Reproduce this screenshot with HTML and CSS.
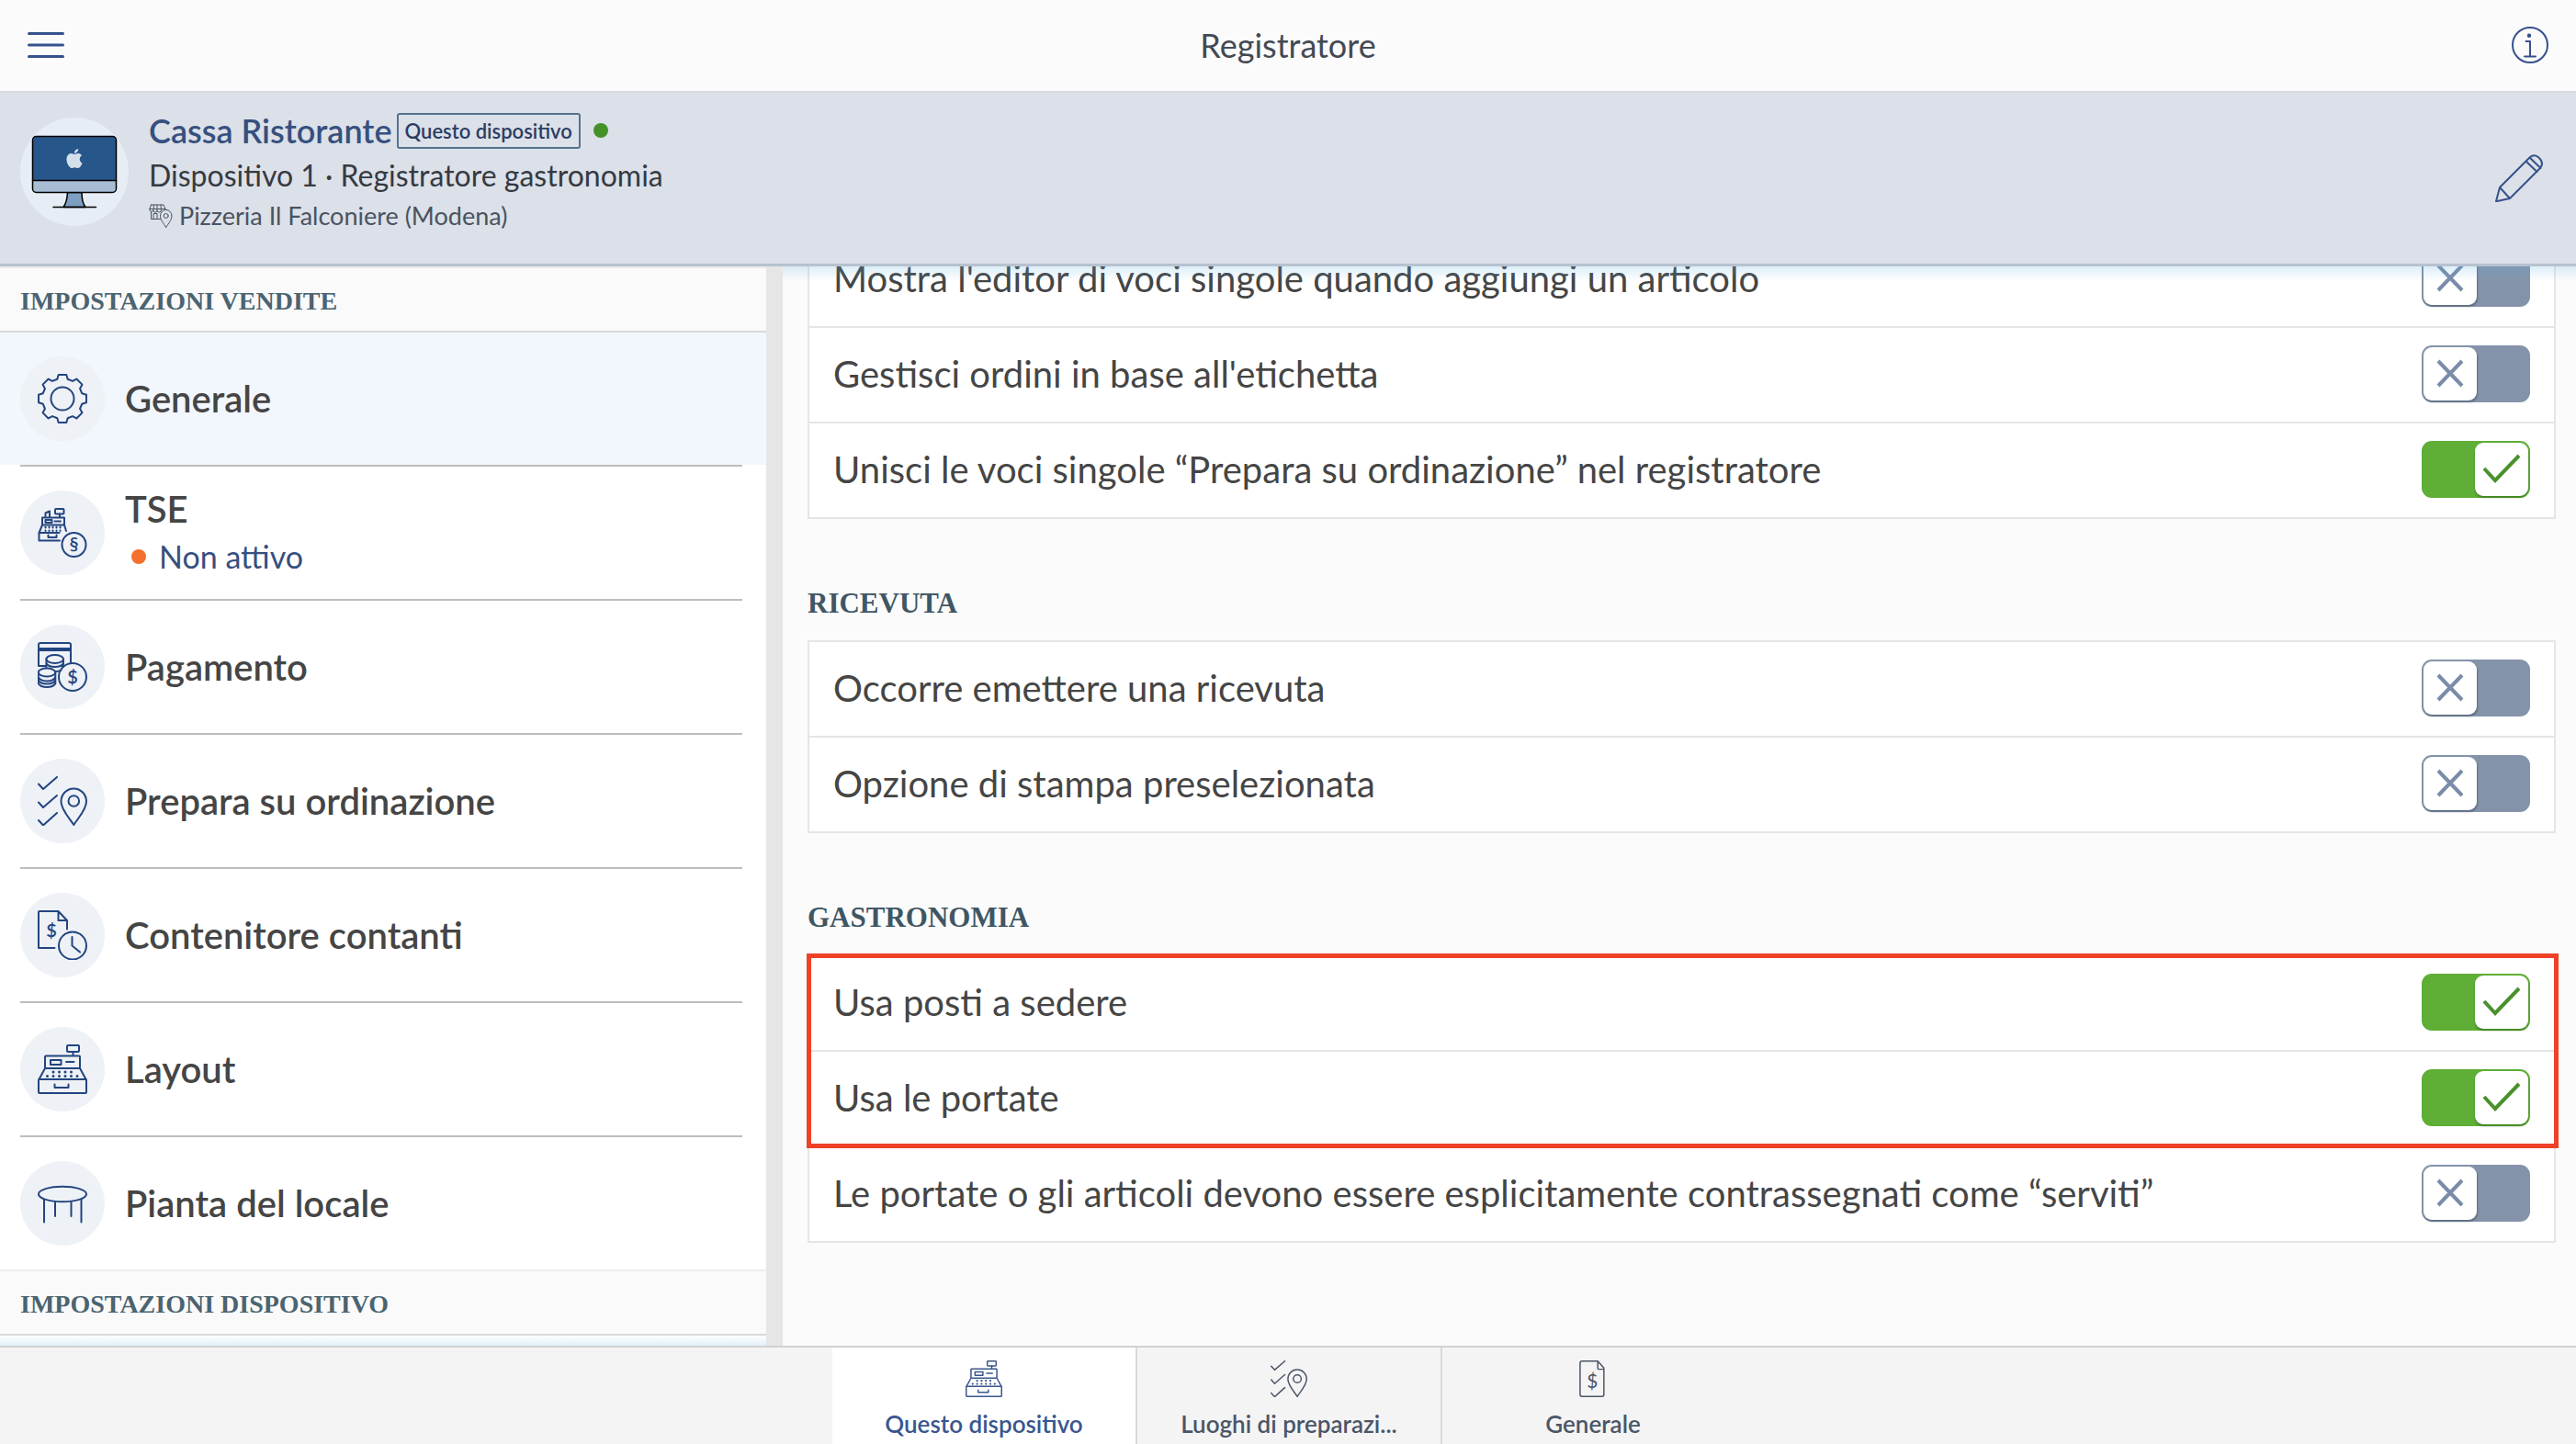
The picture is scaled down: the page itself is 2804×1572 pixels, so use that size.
FILE: index.html
```html
<!DOCTYPE html>
<html lang="it">
<head>
<meta charset="utf-8">
<meta name="viewport" content="width=device-width, initial-scale=1">
<title>Registratore</title>
<link rel="stylesheet" href="styles.css">
</head>
<body>
<svg class="sprite" aria-hidden="true">
  <symbol id="register" viewBox="0 0 54 54">
    <rect x="32" y="1" width="13" height="7" rx="1"/>
    <path d="M38.500 8v4.500M8 26V13.500q0-1 1-1h36q1 0 1 1V26zM8 26L1.500 38M46 26l6.500 12M31 19h8.500M18.500 43.500V47h15v-3.500"/>
    <rect x="14" y="17" width="11.500" height="5"/>
    <rect x="1" y="38" width="52" height="15" rx="1"/>
    <path class="dots" d="M17 30h.01M23.500 30h.01M30 30h.01M36.500 30h.01M10.500 34.500h.01M17 34.500h.01M23.500 34.500h.01M30 34.500h.01M36.500 34.500h.01M43 34.500h.01"/>
  </symbol>
  <symbol id="orders" viewBox="0 0 54 54">
    <path d="M1 8.500L6 14 21 1M1 28.500L6 34 21 21M1 48l5 5.500L21 40M39.300 53C35 46 25.500 37 25.500 27.500a13.700 14 0 0 1 27.500 0C53 37 43.500 46 39.300 53z"/>
    <circle cx="39.300" cy="27" r="5.800"/>
  </symbol>
</svg>

<header class="topbar">
  <button class="icon-button" type="button" aria-label="Menu">
    <svg class="menu-icon" viewBox="0 0 40 30"><path d="M1.500 2.500h37M1.500 15h37M1.500 27.500h37"/></svg>
  </button>
  <h1 class="title">Registratore</h1>
  <button class="icon-button" type="button" aria-label="Informazioni">
    <svg class="info-icon" viewBox="0 0 40 40"><circle cx="20" cy="20" r="19"/><path d="M15.500 16h4.500v16.500M14 32.500h12"/><circle class="solid" cx="19" cy="9.800" r="1.200"/></svg>
  </button>
</header>

<section class="device">
  <svg class="avatar" viewBox="0 0 118 118" aria-hidden="true">
    <circle cx="59" cy="59" r="59" fill="#e7edf5"/>
    <path d="M51.500 81.500Q51 92 47 97.500h24Q67 92 67 81.500z" fill="#7d9fc1" stroke="#000" stroke-width="1.500"/>
    <path d="M36 97.500h46.500" stroke="#000" stroke-width="1.500"/>
    <rect x="13.500" y="20.500" width="91" height="61" rx="4" fill="#a6bdd4"/>
    <path d="M13.500 68.500v-44q0-4 4-4h83q4 0 4 4v44z" fill="#27568b"/>
    <path d="M13.500 68.500h91" stroke="#000" stroke-width="1.500"/>
    <rect x="13.500" y="20.500" width="91" height="61" rx="4" fill="none" stroke="#000" stroke-width="1.500"/>
    <path transform="translate(48.500 34) scale(.875)" fill="#d3dfeb" d="M12.152 6.896c-.948 0-2.415-1.078-3.960-1.040-2.040.027-3.910 1.183-4.961 3.014-2.117 3.675-.546 9.103 1.519 12.090 1.013 1.454 2.208 3.090 3.792 3.039 1.520-.065 2.090-.987 3.935-.987 1.831 0 2.350.987 3.960.948 1.637-.026 2.676-1.480 3.676-2.948 1.156-1.688 1.636-3.325 1.662-3.415-.039-.013-3.182-1.221-3.220-4.857-.026-3.040 2.480-4.494 2.597-4.559-1.429-2.090-3.623-2.324-4.390-2.376-2-.156-3.675 1.090-4.610 1.090zM15.530 3.830c.843-1.012 1.400-2.427 1.245-3.830-1.207.052-2.662.805-3.532 1.818-.780.896-1.454 2.338-1.273 3.714 1.338.104 2.715-.688 3.559-1.701"/>
  </svg>
  <div class="device-text">
    <div class="device-name"><strong>Cassa Ristorante</strong><span class="badge">Questo dispositivo</span><span class="dot online"></span></div>
    <div class="device-kind">Dispositivo 1 · Registratore gastronomia</div>
    <div class="device-place">
      <svg class="place-icon" viewBox="0 0 26 26" aria-hidden="true"><path d="M2.500 1h13.500l2 4.500M2.500 1L1 5.500M1 5.500h17M5.500 1L5 7M9 1v6M13 1l.5 6M1 5.500a2 2 0 0 0 4 1.500 2 2 0 0 0 4.200 0 2 2 0 0 0 4.200 0M2.500 8.500v8h10M5 16v-5.500h4V16M18.700 25.500C16 21 12.500 17.500 12.500 13a6.200 6.500 0 0 1 12.500 0c0 4.500-3.500 8-6.300 12.500z"/><circle cx="18.700" cy="13" r="2.500"/></svg>
      Pizzeria Il Falconiere (Modena)
    </div>
  </div>
  <button class="icon-button edit" type="button" aria-label="Modifica">
    <svg class="edit-icon" viewBox="0 0 52 52"><path d="M5 36L38 3q5-4 10 1 5.500 5.500 1 11L16 48 1 51.300zM5 36l11 12M33.500 7.500L45.500 19M37.500 3.500L49.500 15"/></svg>
  </button>
</section>

<div class="workspace">
  <nav class="sidebar" aria-label="Impostazioni">
    <h2 class="side-heading">IMPOSTAZIONI VENDITE</h2>
    <a class="side-item active" href="#generale">
      <span class="bubble"><svg viewBox="-27 -27 54 54"><path d="M-5.700-21.250L-4.300-26H4.300L5.700-21.250 11-19.060 15.340-21.430 21.430-15.340 19.060-11 21.250-5.700 26-4.300V4.300L21.250 5.700 19.060 11 21.430 15.340 15.340 21.430 11 19.060 5.700 21.250 4.300 26H-4.300L-5.700 21.250-11 19.060-15.340 21.430-21.430 15.340-19.060 11-21.250 5.700-26 4.300V-4.300L-21.250-5.700-19.060-11-21.430-15.340-15.340-21.430-11-19.060z"/><circle r="12.500"/></svg></span>
      <span class="side-label">Generale</span>
    </a>
    <a class="side-item" href="#tse">
      <span class="bubble"><svg viewBox="0 0 54 54"><rect x="19" y="1" width="9.500" height="5.500" rx="1"/><path d="M24 6.500V10M8.500 10V5.500L13 3.500V10M5 18.500v-8h24v8zM5 18.500L1.500 27h22M29 18.500L31 25M1.500 27v8.500h22.500M18.500 14.500h6.500M11.500 29.500v2.500h9v-2.500"/><rect x="8.500" y="13" width="7" height="3"/><path class="keys" d="M8.500 20.500v4.500M12.500 20.500v4.500M16.500 20.500v4.500M20.500 20.500v4.500M24.500 20.500v4.500"/><circle cx="39.500" cy="40" r="13"/><text class="sign" x="39.500" y="46">§</text></svg></span>
      <span class="side-label">TSE<small class="side-note"><span class="dot warning"></span>Non attivo</small></span>
    </a>
    <a class="side-item" href="#pagamento">
      <span class="bubble"><svg viewBox="0 0 54 54"><path d="M9 26H1V3q0-2 2-2h31q2 0 2 2v20"/><path class="stripe" d="M1 8h35"/><ellipse cx="18.700" cy="18.500" rx="9.300" ry="4.500"/><path d="M9.400 18.500V28M28 18.500V27M9.400 23q2 4 9.300 4 7.500 0 9.300-4M19.500 32q4 0 6-1.500"/><ellipse cx="10" cy="33" rx="9.300" ry="4.500"/><path d="M.7 33v12q2 4 9.300 4t9.300-4V33M.7 38q2 4.500 9.300 4.500t9.300-4.500M.7 41.500q2 4 9.300 4t9.300-4"/><circle cx="38" cy="38" r="15"/><text class="sign" x="38" y="45">$</text></svg></span>
      <span class="side-label">Pagamento</span>
    </a>
    <a class="side-item" href="#prepara">
      <span class="bubble"><svg><use href="#orders"/></svg></span>
      <span class="side-label">Prepara su ordinazione</span>
    </a>
    <a class="side-item" href="#contenitore">
      <span class="bubble"><svg viewBox="0 0 54 54"><path d="M18.500 41H1V2q0-1 1-1h20.500L32 11v9.500M22.500 1v10H32M37.500 29v9.500l8.500 7"/><circle cx="38" cy="38.500" r="15"/><text class="sign" x="15" y="28.500">$</text></svg></span>
      <span class="side-label">Contenitore contanti</span>
    </a>
    <a class="side-item" href="#layout">
      <span class="bubble"><svg><use href="#register"/></svg></span>
      <span class="side-label">Layout</span>
    </a>
    <a class="side-item" href="#pianta">
      <span class="bubble"><svg viewBox="0 0 54 54"><ellipse cx="27" cy="17" rx="26" ry="8.300"/><path d="M7 23v24.500M47.500 23v24.500M19 25.500V41M36.500 25.500V41"/></svg></span>
      <span class="side-label">Pianta del locale</span>
    </a>
    <h2 class="side-heading">IMPOSTAZIONI DISPOSITIVO</h2>
    <div class="side-more"></div>
  </nav>

  <main class="main">
    <div class="content">
      <div class="list">
        <label class="row">Mostra l'editor di voci singole quando aggiungi un articolo<input class="toggle" type="checkbox"></label>
        <label class="row">Gestisci ordini in base all'etichetta<input class="toggle" type="checkbox"></label>
        <label class="row">Unisci le voci singole “Prepara su ordinazione” nel registratore<input class="toggle" type="checkbox" checked></label>
      </div>
      <h2 class="heading">RICEVUTA</h2>
      <div class="list">
        <label class="row">Occorre emettere una ricevuta<input class="toggle" type="checkbox"></label>
        <label class="row">Opzione di stampa preselezionata<input class="toggle" type="checkbox"></label>
      </div>
      <h2 class="heading">GASTRONOMIA</h2>
      <div class="list">
        <div class="highlight">
          <label class="row">Usa posti a sedere<input class="toggle" type="checkbox" checked></label>
          <label class="row">Usa le portate<input class="toggle" type="checkbox" checked></label>
        </div>
        <label class="row">Le portate o gli articoli devono essere esplicitamente contrassegnati come “serviti”<input class="toggle" type="checkbox"></label>
      </div>
    </div>
  </main>
</div>

<nav class="tabs" aria-label="Sezioni">
  <a class="tab current" href="#dispositivo"><svg><use href="#register"/></svg><span>Questo dispositivo</span></a>
  <a class="tab" href="#luoghi"><svg><use href="#orders"/></svg><span>Luoghi di preparazi...</span></a>
  <a class="tab" href="#tutti"><svg viewBox="0 0 54 54"><path d="M11 1h23l9 10v39q0 3-3 3H11q-3 0-3-3V4q0-3 3-3zM34 1v10q0 2 2 2h7"/><text class="sign large" x="26" y="40">$</text></svg><span>Generale</span></a>
</nav>
</body>
</html>
```
FILE: styles.css
```css
* { box-sizing: border-box; }

body {
  margin: 0;
  height: 100vh;
  display: flex;
  flex-direction: column;
  overflow: hidden;
  background: #fbfbfb;
  color: #454545;
  font-family: Lato, "Open Sans", sans-serif;
  font-size: 40px;
}

h1, h2 { margin: 0; }
a { color: inherit; text-decoration: none; }

svg {
  fill: none;
  stroke: currentColor;
  stroke-width: 2;
  stroke-linecap: round;
  stroke-linejoin: round;
}

.sprite { display: none; }
.dots { stroke-width: 3; }
.keys { stroke-dasharray: 1 3; }
.stripe { stroke-width: 4; stroke-linecap: butt; }
.solid { fill: currentColor; }

.sign {
  fill: currentColor;
  stroke: none;
  text-anchor: middle;
  font-family: Lato, sans-serif;
  font-size: 20px;
  font-weight: 600;
}
.sign.large { font-size: 28px; font-weight: 400; }

.dot {
  display: inline-block;
  width: 16px;
  height: 16px;
  border-radius: 50%;
}
.online { margin-left: 14px; background: #44912a; }
.warning { margin: 0 14px 0 7px; background: #f4702c; }

.icon-button {
  display: flex;
  padding: 0;
  border: 0;
  background: none;
  color: #36528c;
}

/* Top bar */
.topbar {
  display: flex;
  align-items: center;
  justify-content: space-between;
  flex: none;
  height: 101px;
  padding: 0 30px 2px;
  border-bottom: 2px solid #d9dadb;
}
.title { font-size: 36px; font-weight: 400; color: #434a54; }
.menu-icon { width: 40px; height: 30px; stroke-width: 3; }
.info-icon { width: 40px; height: 40px; }

/* Device banner */
.device {
  display: flex;
  align-items: flex-start;
  gap: 22px;
  flex: none;
  min-height: 189px;
  padding: 18px 36px 18px 22px;
  border-bottom: 3px solid #b7c2cf;
  background: #dce0e8;
}
.avatar { width: 118px; height: 118px; margin-top: 9px; stroke: none; }
.device-text { flex: 1; }
.device-name {
  display: flex;
  align-items: center;
  height: 46px;
  font-size: 36px;
  color: #36507f;
}
.device-name strong { font-weight: 600; }
.badge {
  margin-left: 5px;
  padding: 0 7px;
  border: 2px solid #54738c;
  border-radius: 3px;
  font-size: 22px;
  line-height: 35px;
  font-weight: 600;
  color: #2b3d63;
}
.device-kind { font-size: 32px; line-height: 52px; color: #353a42; }
.device-place {
  display: flex;
  align-items: center;
  gap: 7px;
  font-size: 27px;
  line-height: 36px;
  color: #4a5361;
}
.place-icon { width: 26px; height: 26px; stroke-width: 1; }
.edit { align-self: center; }
.edit-icon { width: 52px; height: 52px; stroke-width: 2; }

/* Workspace */
.workspace {
  display: grid;
  grid-template-columns: minmax(0, 852px) minmax(0, 1fr);
  flex: 1;
  min-height: 0;
}

.sidebar {
  display: flex;
  flex-direction: column;
  overflow: hidden;
  border-right: 18px solid #e6e6e6;
  background: #fff;
}
.side-heading {
  flex: none;
  padding: 4px 22px 0;
  border-top: 2px solid #ececec;
  border-bottom: 2px solid #d9d9d9;
  background: #fafafa;
  color: #4a6471;
  font: bold 28px/64px "Liberation Serif", serif;
}
.side-item {
  display: flex;
  align-items: center;
  gap: 22px;
  flex: none;
  height: 146px;
  padding: 0 22px 2px;
  background: linear-gradient(#bdbdbd, #bdbdbd) 22px 100% / calc(100% - 48px) 2px no-repeat;
}
.side-item:last-of-type { height: 144px; padding-bottom: 0; background: none; }
.active {
  background:
    linear-gradient(#bdbdbd, #bdbdbd) 22px 100% / calc(100% - 48px) 2px no-repeat,
    linear-gradient(#f2f6fd, #f2f6fd) 0 0 / 100% 144px no-repeat;
}
.bubble {
  display: grid;
  place-items: center;
  width: 92px;
  height: 92px;
  border-radius: 50%;
  background: #eef1f6;
  color: #23457f;
}
.bubble svg { width: 54px; height: 54px; }
.side-label { font-weight: 600; line-height: 52px; }
.side-note {
  display: flex;
  align-items: center;
  font-size: 34px;
  font-weight: 400;
  color: #36507f;
}
.side-more { flex: 1; background: linear-gradient(#fff, #e0f0f8); }

/* Settings */
.main { position: relative; overflow: hidden; }
.main::before {
  content: "";
  position: absolute;
  inset: 0 0 auto;
  z-index: 1;
  height: 16px;
  background: linear-gradient(rgba(96, 176, 224, .22), rgba(96, 176, 224, 0));
}
.content { margin-top: -39px; padding: 0 22px 0 27px; }
.list { border: 2px solid #e5e5e5; background: #fff; }
.row {
  display: flex;
  align-items: center;
  justify-content: space-between;
  height: 102px;
  padding: 0 26px 2px;
}
.row + .row, .highlight + .row {
  height: 104px;
  border-top: 2px solid #e5e5e5;
}
.heading {
  padding: 72px 0 20px;
  color: #3f5664;
  font: bold 31px/40px "Liberation Serif", serif;
}

.highlight { position: relative; }
.highlight::after {
  content: "";
  position: absolute;
  inset: -3px -5px -3px -3px;
  border: 5px solid #ee4127;
  pointer-events: none;
}

.toggle {
  appearance: none;
  flex: none;
  width: 118px;
  height: 62px;
  margin: 0;
  padding: 2px;
  border-radius: 11px;
  background: #8493aa;
}
.toggle::before {
  content: "";
  display: block;
  width: 58px;
  height: 58px;
  border-radius: 9px;
  background: #fff url("data:image/svg+xml,%3Csvg xmlns='http://www.w3.org/2000/svg' viewBox='0 0 58 58'%3E%3Cpath d='M16 15L42 42M42 15L16 42' stroke='%237a8ca8' stroke-width='4' fill='none'/%3E%3C/svg%3E");
  box-shadow: 1px 2px 2px rgba(50, 65, 85, .45);
}
.toggle:checked { background: #5fae36; }
.toggle:checked::before {
  margin-left: auto;
  background-image: url("data:image/svg+xml,%3Csvg xmlns='http://www.w3.org/2000/svg' viewBox='0 0 58 58'%3E%3Cpath d='M10 28L22 41L48 14' stroke='%234a912c' stroke-width='4' fill='none'/%3E%3C/svg%3E");
  box-shadow: 0 2px 2px rgba(30, 80, 10, .45);
}

/* Bottom tabs */
.tabs {
  display: flex;
  justify-content: center;
  flex: none;
  height: 107px;
  border-top: 2px solid #d0d1d2;
  background: #f4f4f4;
}
.tab {
  display: flex;
  flex-direction: column;
  align-items: center;
  gap: 13px;
  width: 332px;
  padding-top: 14px;
  border-right: 2px solid #d9d9da;
  color: #4b5668;
  font-size: 26px;
  line-height: 32px;
  font-weight: 600;
}
.tab:last-child { width: 328px; border: 0; }
.tab svg { width: 40px; height: 40px; }
.current { background: #fff; color: #3a568f; }
```
